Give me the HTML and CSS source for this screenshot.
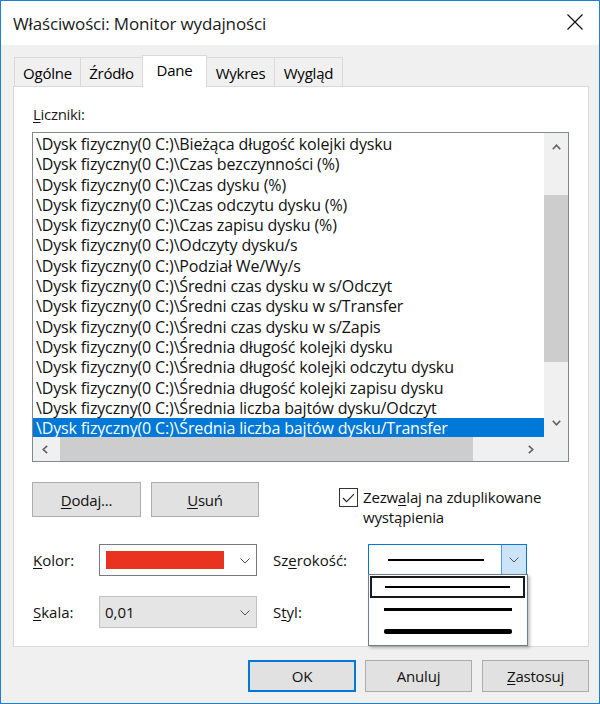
FILE: index.html
```html
<!DOCTYPE html>
<html lang="pl">
<head>
<meta charset="utf-8">
<title>Właściwości: Monitor wydajności</title>
<link rel="stylesheet" href="styles.css">
</head>
<body>
<div class="window">
  <div class="titlebar">
    <span class="title">Właściwości: Monitor wydajności</span>
    <svg class="close" width="16" height="16" viewBox="0 0 16 16"><path d="M0.5 0.5 L15.5 15.5 M15.5 0.5 L0.5 15.5" stroke="#111" stroke-width="1.2" fill="none"/></svg>
  </div>
  <div class="content">
    <div class="tabs">
      <div class="tab t1">Ogólne</div>
      <div class="tab t2">Źródło</div>
      <div class="tab t3 active">Dane</div>
      <div class="tab t4">Wykres</div>
      <div class="tab t5 last">Wygląd</div>
    </div>
    <div class="panel">
      <div class="label"><u>L</u>iczniki:</div>
      <div class="listbox">
        <div class="list-main">
          <div class="items">
            <div class="item">\Dysk fizyczny(0 C:)\Bieżąca długość kolejki dysku</div>
            <div class="item">\Dysk fizyczny(0 C:)\Czas bezczynności (%)</div>
            <div class="item">\Dysk fizyczny(0 C:)\Czas dysku (%)</div>
            <div class="item">\Dysk fizyczny(0 C:)\Czas odczytu dysku (%)</div>
            <div class="item">\Dysk fizyczny(0 C:)\Czas zapisu dysku (%)</div>
            <div class="item">\Dysk fizyczny(0 C:)\Odczyty dysku/s</div>
            <div class="item">\Dysk fizyczny(0 C:)\Podział We/Wy/s</div>
            <div class="item">\Dysk fizyczny(0 C:)\Średni czas dysku w s/Odczyt</div>
            <div class="item">\Dysk fizyczny(0 C:)\Średni czas dysku w s/Transfer</div>
            <div class="item">\Dysk fizyczny(0 C:)\Średni czas dysku w s/Zapis</div>
            <div class="item">\Dysk fizyczny(0 C:)\Średnia długość kolejki dysku</div>
            <div class="item">\Dysk fizyczny(0 C:)\Średnia długość kolejki odczytu dysku</div>
            <div class="item">\Dysk fizyczny(0 C:)\Średnia długość kolejki zapisu dysku</div>
            <div class="item">\Dysk fizyczny(0 C:)\Średnia liczba bajtów dysku/Odczyt</div>
            <div class="item selected">\Dysk fizyczny(0 C:)\Średnia liczba bajtów dysku/Transfer</div>
          </div>
          <div class="vscroll">
            <div class="sbtn vbtn"><svg width="9" height="6" viewBox="0 0 9 6"><polyline points="0.8,5.2 4.5,1.2 8.2,5.2" fill="none" stroke="#606060" stroke-width="1.6"/></svg></div>
            <div class="vtrack"><div class="vthumb"></div></div>
            <div class="sbtn vbtn"><svg width="9" height="6" viewBox="0 0 9 6"><polyline points="0.8,0.8 4.5,4.8 8.2,0.8" fill="none" stroke="#606060" stroke-width="1.6"/></svg></div>
          </div>
        </div>
        <div class="hscroll-row">
          <div class="hscroll">
            <div class="sbtn hbtn-l"><svg width="6" height="9" viewBox="0 0 6 9"><polyline points="5.2,0.8 1.2,4.5 5.2,8.2" fill="none" stroke="#606060" stroke-width="1.6"/></svg></div>
            <div class="htrack"><div class="hthumb"></div></div>
            <div class="sbtn hbtn-r"><svg width="6" height="9" viewBox="0 0 6 9"><polyline points="0.8,0.8 4.8,4.5 0.8,8.2" fill="none" stroke="#606060" stroke-width="1.6"/></svg></div>
          </div>
          <div class="corner"></div>
        </div>
      </div>

      <div class="actions">
        <div class="btn btn-add"><u>D</u>odaj...</div>
        <div class="btn btn-del"><u>U</u>suń</div>
        <div class="check">
          <div class="checkbox"><svg width="13" height="10" viewBox="0 0 13 10"><polyline points="1,5 4.6,8.6 12,1.2" fill="none" stroke="#222" stroke-width="1.1"/></svg></div>
          <div class="check-text">Zezw<u>a</u>laj na zduplikowane<br>wystąpienia</div>
        </div>
      </div>

      <div class="form">
        <div class="flabel"><u>K</u>olor:</div>
        <div class="combo combo-color">
          <div class="swatch"></div>
          <svg class="chev" width="10" height="6" viewBox="0 0 10 6"><polyline points="0.5,0.5 5,5 9.5,0.5" fill="none" stroke="#555" stroke-width="1"/></svg>
        </div>
        <div class="flabel">Sz<u>e</u>rokość:</div>
        <div class="combo combo-width">
          <div class="wline"><div class="line l2"></div></div>
          <div class="wbtn"><svg width="10" height="6" viewBox="0 0 10 6"><polyline points="0.5,0.5 5,5 9.5,0.5" fill="none" stroke="#555" stroke-width="1"/></svg></div>
        </div>
        <div class="flabel"><u>S</u>kala:</div>
        <div class="combo combo-scale">
          <span class="cval">0,01</span>
          <svg class="chev" width="10" height="6" viewBox="0 0 10 6"><polyline points="0.5,0.5 5,5 9.5,0.5" fill="none" stroke="#555" stroke-width="1"/></svg>
        </div>
        <div class="flabel">S<u>t</u>yl:</div>
        <div class="spacer"></div>
      </div>
    </div>

    <div class="footer">
      <div class="btn fbtn ok">OK</div>
      <div class="btn fbtn">Anuluj</div>
      <div class="btn fbtn"><u>Z</u>astosuj</div>
    </div>
  </div>

  <div class="popup">
    <div class="popt focus"><div class="line p1"></div></div>
    <div class="popt"><div class="line p2"></div></div>
    <div class="popt"><div class="line p3"></div></div>
  </div>
</div>
</body>
</html>
```

FILE: styles.css
```css
* { box-sizing: border-box; }

html, body {
  margin: 0;
  padding: 0;
  background: #ffffff;
}

body {
  font-family: "Open Sans", "Noto Sans", "Liberation Sans", sans-serif;
  font-size: 15px;
  color: #000;
}

u {
  text-decoration: underline;
  text-decoration-thickness: 1px;
  text-underline-offset: 2px;
}

.window {
  position: relative;
  width: 600px;
  height: 704px;
  border: 1px solid #1b80d6;
  background: #f0f0f0;
  display: flex;
  flex-direction: column;
}

.titlebar {
  height: 44px;
  background: #ffffff;
  display: flex;
  align-items: center;
  justify-content: space-between;
  padding: 0 16px 0 12px;
}

.title {
  font-size: 17px;
  color: #1a1a1a;
  letter-spacing: -0.15px;
  margin-top: 1px;
}

.close {
  display: block;
  margin-top: -2px;
}

.content {
  padding: 10px 10px 0 12px;
}

.tabs {
  display: flex;
  align-items: flex-end;
  height: 31px;
  padding-left: 1px;
  position: relative;
  z-index: 1;
}

.tab {
  height: 29px;
  border: 1px solid #d9d9d9;
  border-right: none;
  border-bottom: none;
  background: #f0f0f0;
  display: flex;
  align-items: center;
  justify-content: center;
  padding-top: 2px;
  letter-spacing: -0.2px;
}

.tab.last { border-right: 1px solid #d9d9d9; }

.t1 { width: 66px; }
.t2 { width: 62px; }
.t3 { width: 65px; }
.t4 { width: 67px; }
.t5 { width: 69px; }

.tab.active {
  height: 32px;
  margin-bottom: -1px;
  background: #ffffff;
  border-right: 1px solid #d9d9d9;
  padding-top: 0;
  padding-bottom: 3px;
}

.tab.active + .tab { border-left: none; }

.panel {
  width: 576px;
  height: 561px;
  background: #ffffff;
  border: 1px solid #d9d9d9;
  padding: 17px 19px 0 18px;
}

.label {
  height: 20px;
  line-height: 20px;
  padding-left: 1px;
  margin-bottom: 8px;
  color: #1a1a1a;
  letter-spacing: -0.3px;
}

.listbox {
  width: 537px;
  height: 330px;
  border: 1px solid #828790;
  display: flex;
  flex-direction: column;
}

.list-main {
  height: 304px;
  display: flex;
}

.items {
  flex: 1;
  overflow: hidden;
  padding-top: 1px;
}

.item {
  height: 20.3px;
  line-height: 20.3px;
  padding-left: 3px;
  white-space: nowrap;
  font-size: 16px;
  letter-spacing: -0.15px;
  color: #111;
}

.item.selected {
  background: #0078d7;
  color: #ffffff;
  line-height: 21px;
}

.vscroll {
  width: 24px;
  background: #f0f0f0;
  display: flex;
  flex-direction: column;
}

.sbtn {
  display: flex;
  align-items: center;
  justify-content: center;
}

.vbtn { height: 28px; }

.vtrack {
  flex: 1;
  padding-top: 34px;
}

.vthumb {
  height: 167px;
  background: #cdcdcd;
}

.hscroll-row {
  height: 24px;
  display: flex;
}

.hscroll {
  flex: 1;
  display: flex;
  background: #f0f0f0;
}

.hbtn-l { width: 24px; }
.hbtn-r { width: 26px; }

.htrack {
  flex: 1;
  padding-left: 3px;
}

.hthumb {
  width: 413px;
  height: 100%;
  background: #cdcdcd;
}

.corner {
  width: 24px;
  background: #f0f0f0;
}

.actions {
  display: flex;
  align-items: flex-start;
  margin-top: 20px;
  height: 40px;
}

.btn {
  height: 35px;
  background: #e1e1e1;
  border: 1px solid #adadad;
  display: flex;
  align-items: center;
  justify-content: center;
  color: #111;
  letter-spacing: -0.2px;
}

.btn-add { width: 109px; }
.btn-del { width: 108px; margin-left: 10px; }

.check {
  display: flex;
  align-items: flex-start;
  margin-left: 80px;
  margin-top: 6px;
}

.checkbox {
  width: 19px;
  height: 19px;
  border: 1px solid #333;
  background: #fff;
  display: flex;
  align-items: center;
  justify-content: center;
}

.check-text {
  margin-left: 5px;
  line-height: 20px;
  margin-top: -1px;
  color: #111;
  letter-spacing: -0.15px;
}

.form {
  margin-top: 22px;
  display: grid;
  grid-template-columns: 67px 158px 111px 159px;
  row-gap: 20px;
  align-items: center;
}

.flabel {
  padding-left: 1px;
  color: #111;
  letter-spacing: 0;
}

.form .flabel:nth-child(3),
.form .flabel:nth-child(7) { padding-left: 16px; }

.combo {
  height: 32px;
  border: 1px solid #7a7a7a;
  background: #fff;
  display: flex;
  align-items: center;
  position: relative;
}

.combo-color {
  padding-left: 6px;
}

.swatch {
  width: 118px;
  height: 18px;
  background: #e9321f;
}

.chev {
  position: absolute;
  right: 6px;
  top: 13px;
}

.combo-width {
  border-color: #0078d7;
}

.wline {
  flex: 1;
  display: flex;
  align-items: center;
  padding-left: 19px;
}

.line { background: #000; }
.l2 { width: 96px; height: 2px; }

.wbtn {
  width: 25px;
  height: 100%;
  background: #cce4f7;
  border-left: 1px solid #569de5;
  display: flex;
  align-items: center;
  justify-content: center;
}

.combo-scale {
  background: #e5e5e5;
  border-color: #c3c3c3;
  padding-left: 5px;
}

.cval {
  color: #111;
}

.spacer { height: 32px; }

.footer {
  margin-top: 13px;
  width: 576px;
  display: flex;
  justify-content: flex-end;
  gap: 10px;
}

.fbtn {
  height: 32px;
  width: 107px;
}

.fbtn.ok {
  width: 108px;
  margin-right: -1px;
  border: 2px solid #0078d7;
}

.popup {
  position: absolute;
  left: 367px;
  top: 573px;
  width: 160px;
  height: 72px;
  background: #fff;
  border: 1px solid #6f7e8e;
  box-shadow: 2px 2px 3px rgba(0,0,0,0.25);
  padding: 1px 2px 0 1px;
}

.popt {
  height: 22px;
  display: flex;
  align-items: center;
  justify-content: center;
}

.popt.focus {
  border: 2px solid #1a1a1a;
}

.p1 { width: 125px; height: 2px; }
.p2 { width: 128px; height: 3px; }
.p3 { width: 128px; height: 5px; border-radius: 2px; }
```
